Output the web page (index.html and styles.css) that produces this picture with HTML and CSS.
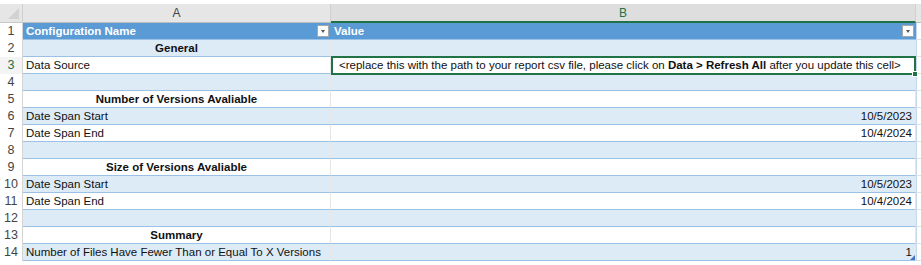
FILE: index.html
```html
<!DOCTYPE html>
<html lang="en">
<head>
  <meta charset="UTF-8" />
  <title>Configuration</title>
  <link rel="stylesheet" href="styles.css">
</head>
<body>
  <div class="sheet">
    <!-- column headers -->
    <div class="corner"><span class="corner-tri"></span></div>
    <div class="col-head">A</div>
    <div class="col-head selected">B</div>
    <div class="col-head edge"></div>

    <!-- row 1: table header -->
    <div class="row-num">1</div>
    <div class="cell head">Configuration Name <span class="filter-btn"></span></div>
    <div class="cell head">Value <span class="filter-btn"></span></div>
    <div class="cell edge"></div>

    <div class="row-num">2</div>
    <div class="cell band title">General</div>
    <div class="cell band"></div>
    <div class="cell edge"></div>

    <div class="row-num active">3</div>
    <div class="cell">Data Source</div>
    <div class="cell picked">&lt;replace this with the path to your report csv file, please click on <b>Data &gt; Refresh All</b> after you update this cell&gt;<span class="fill-handle"></span></div>
    <div class="cell edge"></div>

    <div class="row-num">4</div>
    <div class="cell band"></div>
    <div class="cell band"></div>
    <div class="cell edge"></div>

    <div class="row-num">5</div>
    <div class="cell title">Number of Versions Avaliable</div>
    <div class="cell"></div>
    <div class="cell edge"></div>

    <div class="row-num">6</div>
    <div class="cell band">Date Span Start</div>
    <div class="cell band num">10/5/2023</div>
    <div class="cell edge"></div>

    <div class="row-num">7</div>
    <div class="cell">Date Span End</div>
    <div class="cell num">10/4/2024</div>
    <div class="cell edge"></div>

    <div class="row-num">8</div>
    <div class="cell band"></div>
    <div class="cell band"></div>
    <div class="cell edge"></div>

    <div class="row-num">9</div>
    <div class="cell title">Size of Versions Avaliable</div>
    <div class="cell"></div>
    <div class="cell edge"></div>

    <div class="row-num">10</div>
    <div class="cell band">Date Span Start</div>
    <div class="cell band num">10/5/2023</div>
    <div class="cell edge"></div>

    <div class="row-num">11</div>
    <div class="cell">Date Span End</div>
    <div class="cell num">10/4/2024</div>
    <div class="cell edge"></div>

    <div class="row-num">12</div>
    <div class="cell band"></div>
    <div class="cell band"></div>
    <div class="cell edge"></div>

    <div class="row-num">13</div>
    <div class="cell title">Summary</div>
    <div class="cell"></div>
    <div class="cell edge"></div>

    <div class="row-num">14</div>
    <div class="cell band">Number of Files Have Fewer Than or Equal To X Versions</div>
    <div class="cell band num last">1<span class="resize-tri"></span></div>
    <div class="cell edge"></div>
  </div>
</body>
</html>
```

FILE: styles.css
```css
* {
  margin: 0;
  padding: 0;
  box-sizing: border-box;
}
body {
  background: #fff;
  font-family: "Liberation Sans", Arial, sans-serif;
  font-size: 11.5px;
  color: #111;
}
.sheet {
  margin-top: 4px;
  display: grid;
  grid-template-columns: 23px 308px 585px 1fr;
  grid-template-rows: 19px repeat(14, 17px);
}
.corner {
  background: #e6e6e6;
  border-right: 1px solid #d0d0d0;
  border-bottom: 1px solid #c8c8c8;
  position: relative;
}
.corner-tri {
  position: absolute;
  right: 3px;
  bottom: 3px;
  width: 0;
  height: 0;
  border-left: 11px solid transparent;
  border-bottom: 11px solid #d2d2d2;
}
.col-head {
  background: #e6e6e6;
  border-right: 1px solid #d0d0d0;
  border-bottom: 1px solid #bdbdbd;
  text-align: center;
  line-height: 18px;
  font-size: 12px;
  color: #444;
}
.col-head.selected {
  background: #dedede;
  color: #217346;
  border-bottom: 2px solid #217346;
}
.col-head.edge {
  background: #e6e6e6;
  border-right: none;
}
.row-num {
  background: #fff;
  border-right: 1px solid #d4d4d4;
  color: #444;
  text-align: center;
  font-size: 12.5px;
  line-height: 17px;
}
.row-num.active {
  color: #217346;
  background: #f4f4f4;
}
.cell {
  position: relative;
  line-height: 16px;
  padding: 0 3px;
  border-bottom: 1px solid #9bc2e6;
  border-right: 1px solid #e6e6e6;
  white-space: nowrap;
  overflow: hidden;
}
.cell.head {
  background: #5b9bd5;
  color: #fff;
  font-weight: bold;
  border-bottom: 1px solid #9bc2e6;
  border-right: none;
  overflow: visible;
}
.cell.band {
  background: #ddebf7;
}
.cell.title {
  font-weight: bold;
  text-align: center;
}
.cell.num {
  text-align: right;
}
.cell.edge {
  background: #fff;
  border-left: 1px solid #c6d9ec;
  border-bottom: 1px solid #e2e2e2;
  border-right: none;
}
.filter-btn {
  position: absolute;
  right: 2px;
  top: 2px;
  width: 12px;
  height: 12px;
  background: #fdfdfd;
  border: 1px solid #a8a8a8;
}
.filter-btn::after {
  content: "";
  position: absolute;
  left: 3px;
  top: 4px;
  border-left: 2.5px solid transparent;
  border-right: 2.5px solid transparent;
  border-top: 3px solid #555;
}
.cell.picked {
  overflow: visible;
  border: 2px solid #217346;
  margin-top: -1px;
  height: 19px;
  line-height: 15px;
  padding-left: 6px;
  z-index: 2;
  background: #fff;
}
.fill-handle {
  position: absolute;
  right: -4px;
  bottom: -4px;
  width: 6px;
  height: 6px;
  background: #217346;
  border: 1px solid #fff;
}
.resize-tri {
  position: absolute;
  right: 0;
  bottom: 0;
  border-left: 5px solid transparent;
  border-bottom: 5px solid #4472c4;
}
```
